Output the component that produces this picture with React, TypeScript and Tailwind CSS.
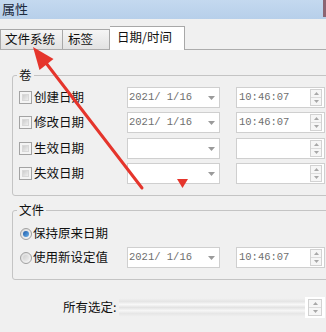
import React from "react";

const DownTri = () => (
  <svg width="7" height="4" viewBox="0 0 7 4">
    <polygon points="0,0 7,0 3.5,4" fill="#9a9a9a" />
  </svg>
);

const Checkbox = () => (
  <div className="w-[13px] h-[13px] border border-[#a3a3a3] bg-[#f4f4f4] p-[2px] shrink-0">
    <div className="w-full h-full bg-gradient-to-br from-[#cdcdcd] to-[#efefef] border border-[#d8d8d8]" />
  </div>
);

const Radio = ({ checked }: { checked?: boolean }) => (
  <div className="w-[12px] h-[12px] rounded-full border border-[#a0a0a0] bg-gradient-to-br from-[#dadada] to-[#f6f6f6] flex items-center justify-center shrink-0">
    {checked ? (
      <div className="w-[6px] h-[6px] rounded-full bg-gradient-to-br from-[#1d5aa8] to-[#6ab0ea]" />
    ) : (
      <div className="w-[6px] h-[6px] rounded-full bg-gradient-to-br from-[#d0d0d0] to-[#ececec]" />
    )}
  </div>
);

const Combo = ({ text }: { text?: string }) => (
  <div className="w-[93px] h-[21px] bg-white border border-[#cfcfcf] flex items-center justify-between pl-[1px] pr-[4px] shrink-0">
    <span className="font-['Liberation_Mono',monospace] text-[10.5px] leading-none text-[#6e6e6e] whitespace-pre">
      {text ?? ""}
    </span>
    <DownTri />
  </div>
);

const Spinner = ({ w = 12, h = 17 }: { w?: number; h?: number }) => (
  <div
    className="flex flex-col border border-[#d2d2d2] bg-[#f6f6f6] shrink-0"
    style={{ width: w, height: h }}
  >
    <div className="flex-1 flex items-center justify-center border-b border-[#dcdcdc]">
      <svg width="5" height="3" viewBox="0 0 5 3">
        <polygon points="0,3 5,3 2.5,0" fill="#a8a8a8" />
      </svg>
    </div>
    <div className="flex-1 flex items-center justify-center">
      <svg width="5" height="3" viewBox="0 0 5 3">
        <polygon points="0,0 5,0 2.5,3" fill="#a8a8a8" />
      </svg>
    </div>
  </div>
);

const TimeBox = ({ text }: { text?: string }) => (
  <div className="ml-[16px] w-[89px] h-[21px] bg-white border border-[#cfcfcf] flex items-center justify-between pl-[2px] pr-[2px] shrink-0">
    <span className="font-['Liberation_Mono',monospace] text-[10.5px] leading-none text-[#6e6e6e] whitespace-pre">
      {text ?? ""}
    </span>
    <Spinner />
  </div>
);

const CheckRow = ({ label, date, time }: { label: string; date?: string; time?: string }) => (
  <div className="flex items-center h-[21px]">
    <div className="w-[114px] flex items-center pl-[6px]">
      <Checkbox />
      <span className="ml-[2px] text-[12.5px] leading-none text-[#111]">{label}</span>
    </div>
    <Combo text={date} />
    <TimeBox text={time} />
  </div>
);

export default function App() {
  return (
    <div className="relative w-[326px] h-[332px] overflow-hidden bg-[#f0f0f0] font-['Noto_Sans_CJK_SC','Noto_Sans',sans-serif]">
      {/* Title bar */}
      <div className="h-[19px] bg-gradient-to-b from-[#c4d9ef] to-[#b7cfea] flex justify-between">
        <span className="pl-[2px] pt-[2px] text-[13px] leading-[14px] text-[#1c2a3e]">属性</span>
        <div className="w-[3px] h-[17px] bg-[#8c6472]" />
      </div>

      {/* Tabs */}
      <div className="h-[30px] flex items-end">
        <div className="w-[63px] h-[20px] border border-b-0 border-[#a8a8a8] bg-gradient-to-b from-[#f5f5f5] to-[#e2e2e2] flex items-center pl-[4px] text-[12.5px] leading-none text-[#111]">
          文件系统
        </div>
        <div className="w-[47px] h-[20px] border border-l-0 border-b-0 border-[#a8a8a8] bg-gradient-to-b from-[#f5f5f5] to-[#e2e2e2] flex items-center pl-[5px] text-[12.5px] leading-none text-[#111]">
          标签
        </div>
        <div className="relative z-10 -mb-px w-[75px] h-[24px] border border-l-0 border-b-0 border-[#a8a8a8] bg-white flex items-center pl-[7px] pb-[2px] text-[12.5px] leading-none text-[#111]">
          日期/时间
        </div>
      </div>

      {/* Panel */}
      <div className="border-t border-[#acacac] pt-[17px]">
        <fieldset className="ml-[12px] w-[322px] border border-[#c4c4c4] rounded-[3px] p-0 pb-[11px] m-0">
          <legend className="ml-[4px] px-[2px] text-[12.5px] leading-[16px] text-[#111]">卷</legend>
          <div className="pt-[4px] flex flex-col gap-[4px]">
            <CheckRow label="创建日期" date="2021/ 1/16" time="10:46:07" />
            <CheckRow label="修改日期" date="2021/ 1/16" time="10:46:07" />
            <div className="mt-[1px]">
              <CheckRow label="生效日期" />
            </div>
            <CheckRow label="失效日期" />
          </div>
        </fieldset>

        <fieldset className="mt-[6px] ml-[12px] w-[322px] border border-[#c4c4c4] rounded-[3px] p-0 pb-[11px] m-0">
          <legend className="ml-[4px] px-[2px] text-[12.5px] leading-[16px] text-[#111]">文件</legend>
          <div className="pt-[5px] flex flex-col gap-[3px]">
            <div className="flex items-center h-[21px] pl-[7px]">
              <Radio checked />
              <span className="ml-[1px] text-[12.5px] leading-none text-[#111]">保持原来日期</span>
            </div>
            <div className="flex items-center h-[21px]">
              <div className="w-[114px] flex items-center pl-[7px]">
                <Radio />
                <span className="ml-[1px] text-[12.5px] leading-none text-[#111]">使用新设定值</span>
              </div>
              <Combo text="2021/ 1/16" />
              <TimeBox text="10:46:07" />
            </div>
          </div>
        </fieldset>

        <div className="mt-[17px] flex items-center h-[21px]">
          <span className="ml-[63px] w-[56px] text-[12.5px] leading-none text-[#111]">所有选定:</span>
          <div className="w-[186px] h-[19px] bg-[linear-gradient(to_bottom,#f1f1f1_0%,#e5e5e5_18%,#f8f8f8_34%,#e3e3e3_50%,#f6f6f6_66%,#e6e6e6_82%,#f1f1f1_100%)]" />
          <div className="bg-white h-[21px] w-[20px] flex items-center justify-center">
            <Spinner w={14} h={17} />
          </div>
        </div>
      </div>

      {/* Red annotation arrow */}
      <svg className="absolute inset-0 pointer-events-none" width="326" height="332" viewBox="0 0 326 332">
        <line x1="46" y1="63" x2="142" y2="188" stroke="#e5352c" strokeWidth="3" strokeLinecap="round" />
        <polygon points="33,47 53.5,59 39.5,70" fill="#e5352c" />
        <polygon points="177,179 188,179 182.5,188" fill="#e5352c" />
      </svg>
    </div>
  );
}
